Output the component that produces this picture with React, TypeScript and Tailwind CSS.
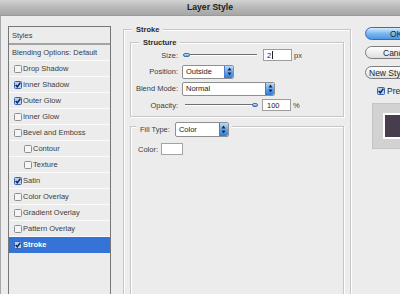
import React from "react";

function Check({ checked }: { checked?: boolean }) {
  return (
    <svg width="8" height="8" viewBox="0 0 8 8" className="shrink-0 block">
      <rect
        x="0.5"
        y="0.5"
        width="7"
        height="7"
        rx="1"
        fill={checked ? "#b9d0f1" : "#f5f5f5"}
        stroke={checked ? "#3d64a8" : "#8e8e8e"}
      />
      {checked && (
        <path d="M1.7 3.9 L3.3 5.7 L6.4 1.6" stroke="#0d2460" strokeWidth="1.5" fill="none" />
      )}
    </svg>
  );
}

function Spinner() {
  return (
    <div className="w-[9px] h-full shrink-0 bg-gradient-to-b from-[#b7d8fa] via-[#6aa7ec] to-[#2f78d6] border-l border-[#4c7cc4] rounded-r-[2px] flex items-center justify-center">
      <svg width="5" height="9" viewBox="0 0 5 9" className="block">
        <path d="M2.5 0.5 L4.5 3.5 L0.5 3.5 Z" fill="#13234a" />
        <path d="M2.5 8.5 L4.5 5.5 L0.5 5.5 Z" fill="#13234a" />
      </svg>
    </div>
  );
}

function Slider({ right }: { right?: boolean }) {
  return (
    <div className="relative w-full h-[6px] flex items-center">
      <div className="w-full h-[2px] bg-[#6f6f6f] border-b border-[#ffffff]" />
      {right ? (
        <div className="absolute right-[-1px] top-[1px] w-[6px] h-[4px] rounded-full bg-gradient-to-b from-[#d8ebfd] to-[#5b98e3] border border-[#3f6fb8]" />
      ) : (
        <div className="absolute left-0 top-[1px] w-[7px] h-[4px] rounded-full bg-gradient-to-b from-[#d8ebfd] to-[#5b98e3] border border-[#3f6fb8]" />
      )}
    </div>
  );
}

const items: { label: string; checked?: boolean; indent?: boolean; selected?: boolean }[] = [
  { label: "Drop Shadow" },
  { label: "Inner Shadow", checked: true },
  { label: "Outer Glow", checked: true },
  { label: "Inner Glow" },
  { label: "Bevel and Emboss" },
  { label: "Contour", indent: true },
  { label: "Texture", indent: true },
  { label: "Satin", checked: true },
  { label: "Color Overlay" },
  { label: "Gradient Overlay" },
  { label: "Pattern Overlay" },
  { label: "Stroke", checked: true, selected: true },
];

export default function App() {
  return (
    <div className="w-[400px] h-[294px] overflow-hidden bg-[#ececec] flex flex-col font-['Liberation_Sans',Arial,sans-serif] text-[#3c3c3c] text-[7.5px] leading-[9px]">
      {/* title bar */}
      <div className="h-[16px] shrink-0 bg-gradient-to-b from-[#d2d2d2] via-[#b8b8b8] to-[#a6a6a6] border-b border-[#9a9a9a] flex items-center justify-center pl-[20px]">
        <span className="font-bold text-[8.6px] text-[#1c1c1c]">Layer Style</span>
      </div>

      <div className="flex flex-row flex-1 min-h-0 border-l border-[#a9a9a9] pl-[7px]">
        {/* left panel */}
        <div className="mt-[10px] w-[103px] h-[300px] shrink-0 border border-[#777777] flex flex-col">
          <div className="h-[16px] flex items-center pl-[3px]">Styles</div>
          <div className="h-[2px] bg-[#a3a3a3]" />
          <div className="h-[16px] flex items-center pl-[3px] border-b border-[#fbfbfb]">
            Blending Options: Default
          </div>
          {items.map((it) => (
            <div
              key={it.label}
              className={
                "h-[16px] flex items-center gap-[1px] border-b " +
                (it.indent ? "pl-[15px] " : "pl-[5px] ") +
                (it.selected
                  ? "bg-[#3574d6] border-[#3574d6] text-white font-bold"
                  : "border-[#fbfbfb]")
              }
            >
              <Check checked={it.checked} />
              <span>{it.label}</span>
            </div>
          ))}
        </div>

        {/* main area */}
        <div className="ml-[12px] mt-[13px] w-[228px] h-[300px] shrink-0 border border-[#c6c6c6] shadow-[inset_1px_1px_0_#ffffff,1px_1px_0_#ffffff] flex flex-col">
          <div className="-mt-[5px] ml-[8px] px-[4px] w-fit bg-[#ececec] font-bold text-[#2a2a2a]">Stroke</div>

          {/* Structure */}
          <div className="mt-[8px] mx-[6px] border border-[#c6c6c6] shadow-[inset_1px_1px_0_#ffffff,1px_1px_0_#ffffff] pb-[3px] flex flex-col">
            <div className="-mt-[5px] ml-[8px] px-[4px] w-fit bg-[#ececec] font-bold text-[#2a2a2a]">Structure</div>

            <div className="h-[16px] flex items-center">
              <div className="w-[47px] text-right">Size:</div>
              <div className="ml-[5px] w-[74px]">
                <Slider />
              </div>
              <div className="ml-[6px] w-[29px] h-[12px] bg-white border border-[#9d9d9d] flex items-center pl-[3px] text-[#222]">
                2<span className="ml-[1px] w-[1px] h-[8px] bg-[#222]" />
              </div>
              <span className="ml-[2px]">px</span>
            </div>

            <div className="h-[17px] flex items-center">
              <div className="w-[47px] text-right">Position:</div>
              <div className="ml-[4px] w-[52px] h-[14px] bg-white border border-[#8f8f8f] rounded-[2px] flex items-center">
                <span className="pl-[3px] flex-1 text-[#222]">Outside</span>
                <Spinner />
              </div>
            </div>

            <div className="h-[17px] flex items-center">
              <div className="w-[47px] text-right">Blend Mode:</div>
              <div className="ml-[4px] w-[93px] h-[14px] bg-white border border-[#8f8f8f] rounded-[2px] flex items-center">
                <span className="pl-[3px] flex-1 text-[#222]">Normal</span>
                <Spinner />
              </div>
            </div>

            <div className="h-[16px] flex items-center">
              <div className="w-[47px] text-right">Opacity:</div>
              <div className="ml-[7px] w-[72px]">
                <Slider right />
              </div>
              <div className="ml-[5px] w-[29px] h-[12px] bg-white border border-[#9d9d9d] flex items-center pl-[4px] text-[#222]">
                100
              </div>
              <span className="ml-[2px]">%</span>
            </div>
          </div>

          {/* Fill type */}
          <div className="mt-[9px] mx-[6px] flex-1 border border-[#c6c6c6] shadow-[inset_1px_1px_0_#ffffff,1px_1px_0_#ffffff] flex flex-col">
            <div className="-mt-[5px] ml-[5px] pl-[4px] pr-[3px] w-fit bg-[#ececec] flex items-center">
              <span>Fill Type:</span>
              <div className="ml-[5px] w-[54px] h-[15px] bg-white border border-[#8f8f8f] rounded-[2px] flex items-center">
                <span className="pl-[3px] flex-1 text-[#222]">Color</span>
                <Spinner />
              </div>
            </div>
            <div className="mt-[5px] h-[14px] flex items-center pl-[7px]">
              <span>Color:</span>
              <div className="ml-[3px] w-[22px] h-[12px] bg-white border border-[#a3a3a3]" />
            </div>
          </div>
        </div>

        {/* right column */}
        <div className="ml-[14px] flex flex-col shrink-0 text-[8.5px] leading-[10px] text-[#1f1f1f]">
          <div className="mt-[11px] w-[62px] h-[13px] rounded-full border border-[#3d69ad] bg-gradient-to-b from-[#d4ebfd] via-[#7ab8f1] to-[#4c95e6] flex items-center pl-[24px]">
            OK
          </div>
          <div className="mt-[6px] w-[62px] h-[13px] rounded-full border border-[#7d7d7d] bg-gradient-to-b from-[#ffffff] to-[#dedede] flex items-center pl-[17px]">
            Cancel
          </div>
          <div className="mt-[7px] w-[62px] h-[13px] rounded-full border border-[#7d7d7d] bg-gradient-to-b from-[#ffffff] to-[#dedede] flex items-center pl-[3px]">
            New Style...
          </div>
          <div className="mt-[7px] h-[10px] flex items-center pl-[12px] gap-[2px]">
            <Check checked />
            <span>Preview</span>
          </div>
          <div className="mt-[7px] ml-[7px] w-[40px] h-[46px] bg-[#d2d2d2] border border-[#c4c4c4] pl-[10px] pt-[9px]">
            <div className="w-[30px] h-[26px] bg-white p-[2px]">
              <div className="w-full h-full bg-[#483d4d]" />
            </div>
          </div>
        </div>
      </div>
    </div>
  );
}
